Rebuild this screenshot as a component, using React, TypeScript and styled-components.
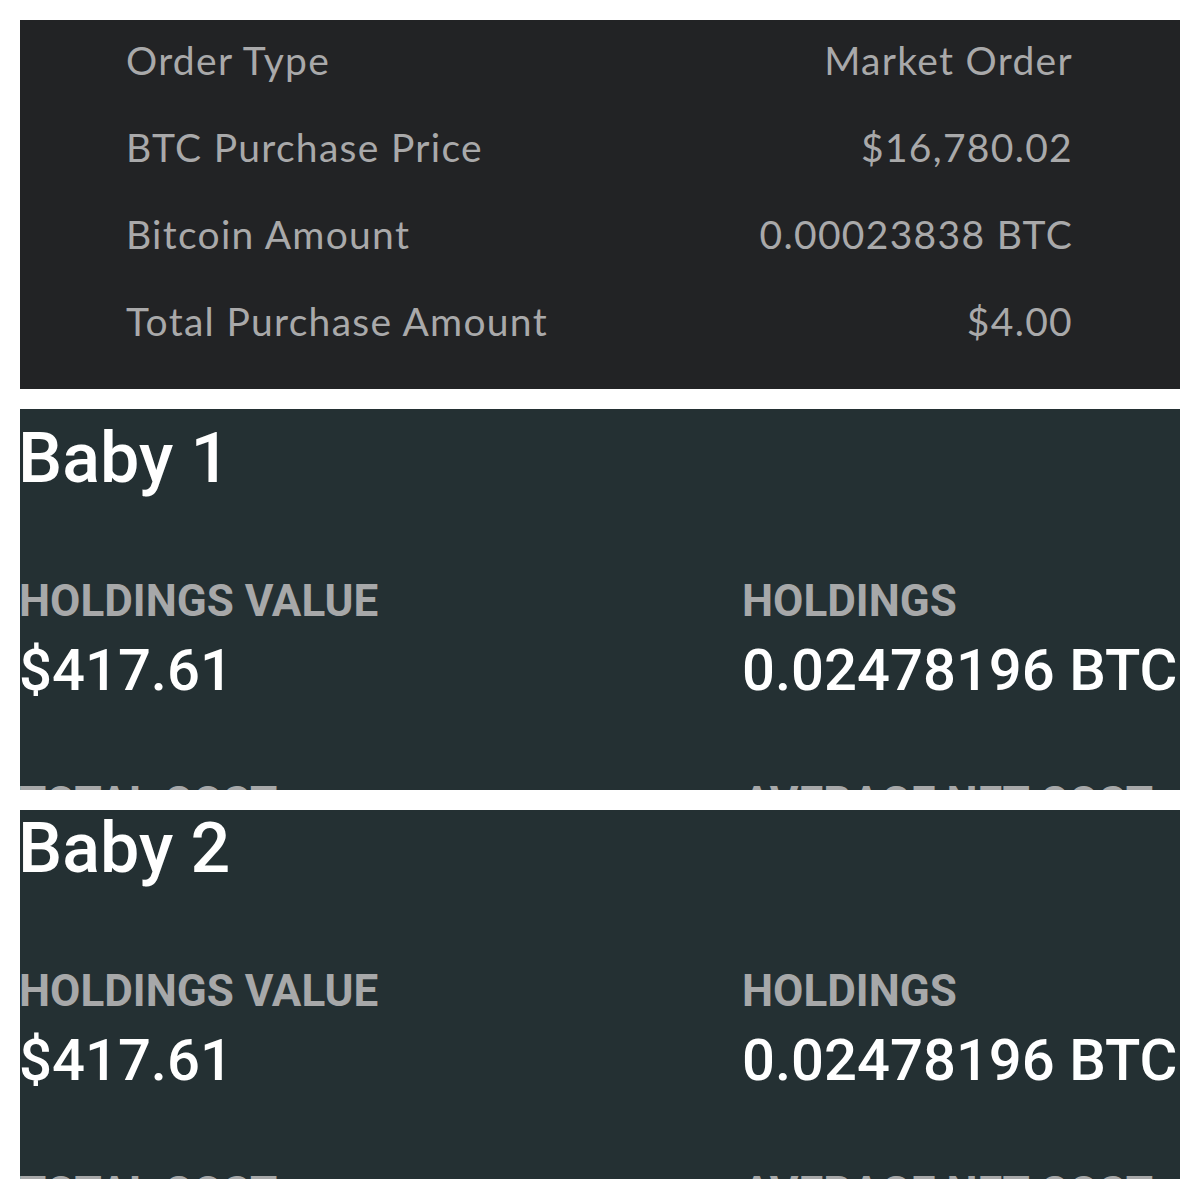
import React from "react";
import styled, { createGlobalStyle } from "styled-components";

const Global = createGlobalStyle`
  html, body { margin: 0; padding: 0; background: #ffffff; }
  body { width: 1200px; height: 1200px; overflow: hidden; }
`;

const Page = styled.div`
  display: flex;
  flex-direction: column;
  padding: 20px;
  gap: 20px;
  width: 1200px;
  height: 1200px;
  box-sizing: border-box;
`;

const OrderPanel = styled.section`
  background: #222325;
  height: 369px;
  box-sizing: border-box;
  padding: 20px 107px 0 106px;
  display: flex;
  flex-direction: column;
  gap: 47px;
`;

const OrderRow = styled.div`
  display: flex;
  justify-content: space-between;
  align-items: center;
  height: 40px;
  font-family: Lato, "Open Sans", sans-serif;
  font-size: 39px;
  color: #a9a9aa;
  letter-spacing: 1.3px;
`;

const WalletPanel = styled.section<{ $top: number; $h: number }>`
  background: #243033;
  height: ${(p) => p.$h}px;
  overflow: hidden;
  padding-top: ${(p) => p.$top}px;
  box-sizing: border-box;
  font-family: Roboto, "Noto Sans", sans-serif;
`;

const Title = styled.h2`
  margin: 0 0 0 -2px;
  font-size: 70px;
  line-height: 70px;
  font-weight: 500;
  color: #ffffff;
`;

const StatGrid = styled.div`
  display: grid;
  grid-template-columns: 723px 1fr;
  row-gap: 64px;
  margin: 80px 0 0 -1px;
`;

const Stat = styled.div`
  display: flex;
  flex-direction: column;
`;

const Label = styled.div`
  font-size: 44px;
  line-height: 56px;
  font-weight: 700;
  color: #a7a8a9;
  white-space: nowrap;
`;

const Value = styled.div`
  font-size: 58px;
  line-height: 82px;
  font-weight: 500;
  color: #ffffff;
  white-space: nowrap;
`;

const orderRows: [string, string][] = [
  ["Order Type", "Market Order"],
  ["BTC Purchase Price", "$16,780.02"],
  ["Bitcoin Amount", "0.00023838 BTC"],
  ["Total Purchase Amount", "$4.00"],
];

const stats: [string, string][] = [
  ["HOLDINGS VALUE", "$417.61"],
  ["HOLDINGS", "0.02478196 BTC"],
  ["TOTAL COST", "$400.00"],
  ["AVERAGE NET COST", "$16,140.50"],
];

function Wallet({ name, top, h }: { name: string; top: number; h: number }) {
  return (
    <WalletPanel $top={top} $h={h}>
      <Title>{name}</Title>
      <StatGrid>
        {stats.map(([l, v]) => (
          <Stat key={l}>
            <Label>{l}</Label>
            <Value>{v}</Value>
          </Stat>
        ))}
      </StatGrid>
    </WalletPanel>
  );
}

export default function App() {
  return (
    <>
      <Global />
      <Page>
        <OrderPanel>
          {orderRows.map(([k, v]) => (
            <OrderRow key={k}>
              <span>{k}</span>
              <span>{v}</span>
            </OrderRow>
          ))}
        </OrderPanel>
        <Wallet name="Baby 1" top={14} h={381} />
        <Wallet name="Baby 2" top={3} h={369} />
      </Page>
    </>
  );
}
